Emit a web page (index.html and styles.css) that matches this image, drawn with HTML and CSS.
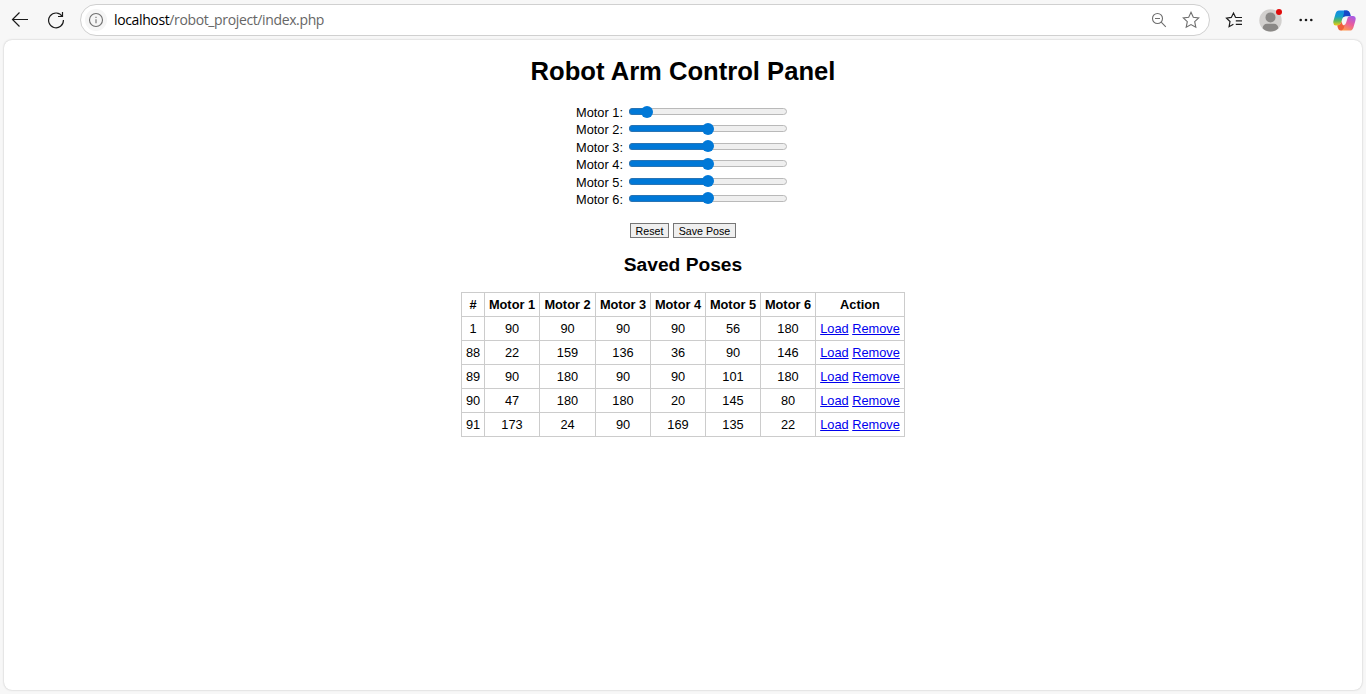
FILE: index.html
```
<!DOCTYPE html>
<html lang="en">
<head>
<meta charset="utf-8">
<title>Robot Arm Control Panel</title>
<link rel="stylesheet" href="styles.css">
</head>
<body>
<header class="toolbar">
  <svg class="back" width="18" height="18" viewBox="0 0 18 18"><path d="M17 8.5H1.5M8.5 1.5l-7 7 7 7"/></svg>
  <svg class="reload" width="18" height="18" viewBox="0 0 18 18"><path d="M15.3 5.5A7.4 7.4 0 1 0 16.4 9M15.5 1V5.5H11"/></svg>
  <div class="address">
    <span class="info"><svg width="16" height="16" viewBox="0 0 16 16"><circle cx="8" cy="8" r="6.5"/><path d="M8 7.2v4M8 4.7v1.3"/></svg></span>
    <span class="url"><b>localhost</b>/robot_project/index.php</span>
    <svg class="zoom" width="16" height="16" viewBox="0 0 16 16"><circle cx="6.5" cy="6.5" r="5"/><path d="M4 6.5h5M10.2 10.2l4.6 4.6"/></svg>
    <svg class="star" width="18" height="18" viewBox="0 0 18 18"><path d="M9 1.3l2.3 5 5.4.7-4 3.7 1.1 5.6L9 13.6l-4.8 2.7 1.1-5.6-4-3.7 5.4-.7z"/></svg>
  </div>
  <svg class="favorites" width="18" height="18" viewBox="0 0 18 18"><path d="M10.6 6.5L8.5 2.1 6.3 6.4l-4.8.7L5 10.5l-.9 5.2 4.3-2.4M10.4 6.5H17M10.8 9.8H17M10.8 13.3H17"/></svg>
  <div class="profile">
    <svg width="23" height="23" viewBox="0 0 23 23"><circle cx="11.5" cy="11.5" r="11.2" fill="#d2d0ce"/><circle cx="11.5" cy="8.4" r="5" fill="#8a8886"/><path d="M3.6 19.2Q4.2 14.7 8 14.7h7q3.8 0 4.4 4.5a11.2 11.2 0 0 1-15.8 0z" fill="#8a8886"/></svg>
    <span class="badge"></span>
  </div>
  <svg class="more" width="14" height="4" viewBox="0 0 14 4"><circle cx="1.7" cy="2" r="1.3"/><circle cx="7" cy="2" r="1.3"/><circle cx="12.3" cy="2" r="1.3"/></svg>
  <svg class="copilot" width="23" height="21" viewBox="0 0 23 21">
    <defs>
      <linearGradient id="cool" x1="0" y1="0" x2="0" y2="1"><stop offset="0" stop-color="#1688e8"/><stop offset=".4" stop-color="#12a0c8"/><stop offset=".7" stop-color="#62b957"/><stop offset="1" stop-color="#f4cc12"/></linearGradient>
      <linearGradient id="warm" x1=".8" y1="0" x2=".3" y2="1"><stop offset="0" stop-color="#a55be8"/><stop offset=".5" stop-color="#ea5c9b"/><stop offset="1" stop-color="#ff9a4c"/></linearGradient>
    </defs>
    <path d="M6 .4h9Q12.8 1 12 6.2q-2 .2-2.6 2.2L8 13Q7.2 15.5 4 15.5H2.8Q-.8 15 .7 10L2.6 3.5Q3.5.4 6 .4z" fill="url(#cool)"/>
    <path d="M11 .4h3q2.3 0 3 2.7l.9 3.1h-4.7q-2 0-3.4 1.2L11 3.3z" fill="#1748c7"/>
    <path d="M17 20.6H7.5q2.3-.9 3.3-5.3 1.8-.6 2.4-2.8l1.5-5q.6-1.5 3.3-1.5h2.3Q23.7 6.2 22.3 11l-1.9 6.5q-.9 3.1-3.4 3.1z" fill="url(#warm)"/>
    <path d="M4.2 15.5Q7.2 15.2 8 13l.7-2.1q.3 4.6 2.8 4.6-.8 5.1-4 5.1-1.8 0-2.5-2.4z" fill="#ef6038"/>
  </svg>
</header>
<main class="page">
  <h1>Robot Arm Control Panel</h1>
  <div class="motors">
    <div class="motor"><label>Motor 1:</label><div class="slider low"><i class="fill"></i><i class="thumb"></i></div></div>
    <div class="motor"><label>Motor 2:</label><div class="slider"><i class="fill"></i><i class="thumb"></i></div></div>
    <div class="motor"><label>Motor 3:</label><div class="slider"><i class="fill"></i><i class="thumb"></i></div></div>
    <div class="motor"><label>Motor 4:</label><div class="slider"><i class="fill"></i><i class="thumb"></i></div></div>
    <div class="motor"><label>Motor 5:</label><div class="slider"><i class="fill"></i><i class="thumb"></i></div></div>
    <div class="motor"><label>Motor 6:</label><div class="slider"><i class="fill"></i><i class="thumb"></i></div></div>
  </div>
  <div class="actions"><button class="reset">Reset</button><button class="save">Save Pose</button></div>
  <h2>Saved Poses</h2>
  <table class="poses">
    <colgroup><col class="c-id"><col class="c-m"><col class="c-m2"><col class="c-m"><col class="c-m"><col class="c-m"><col class="c-m"><col class="c-act"></colgroup>
    <tr><th>#</th><th>Motor 1</th><th>Motor 2</th><th>Motor 3</th><th>Motor 4</th><th>Motor 5</th><th>Motor 6</th><th>Action</th></tr>
    <tr><td>1</td><td>90</td><td>90</td><td>90</td><td>90</td><td>56</td><td>180</td><td><a href="#">Load</a> <a href="#">Remove</a></td></tr>
    <tr><td>88</td><td>22</td><td>159</td><td>136</td><td>36</td><td>90</td><td>146</td><td><a href="#">Load</a> <a href="#">Remove</a></td></tr>
    <tr><td>89</td><td>90</td><td>180</td><td>90</td><td>90</td><td>101</td><td>180</td><td><a href="#">Load</a> <a href="#">Remove</a></td></tr>
    <tr><td>90</td><td>47</td><td>180</td><td>180</td><td>20</td><td>145</td><td>80</td><td><a href="#">Load</a> <a href="#">Remove</a></td></tr>
    <tr><td>91</td><td>173</td><td>24</td><td>90</td><td>169</td><td>135</td><td>22</td><td><a href="#">Load</a> <a href="#">Remove</a></td></tr>
  </table>
</main>
</body>
</html>
```
FILE: styles.css
```
* { box-sizing: border-box; }
body {
  margin: 0;
  height: 694px;
  overflow: hidden;
  display: flex;
  flex-direction: column;
  background: #f7f7f7;
  font: 12.8px/15px "Liberation Sans", Arial, sans-serif;
  color: #000;
}
svg { display: block; flex: none; }

/* Browser toolbar */
.toolbar { height: 40px; flex: none; display: flex; align-items: center; padding-left: 11px; }
.back, .reload, .favorites { fill: none; stroke: #1b1b1b; stroke-width: 1.2; }
.reload { margin-left: 18px; }
.address {
  width: 1130px;
  height: 32px;
  margin-left: 15px;
  flex: none;
  display: flex;
  align-items: center;
  background: #fff;
  border: 1px solid #d0d0d0;
  border-radius: 16px;
}
.info {
  width: 22px;
  height: 22px;
  margin-left: 4px;
  display: grid;
  place-items: center;
  border-radius: 50%;
  background: #f5f5f5;
}
.info svg, .zoom, .star { fill: none; stroke: #6e6e6e; stroke-width: 1.1; }
.url {
  margin-left: 7px;
  flex: 1;
  font: 14px/20px "Open Sans", "Noto Sans", sans-serif;
  letter-spacing: -0.37px;
  color: #666;
}
.url b { font-weight: 400; color: #000; }
.star { margin: 0 9px 0 15px; }
.favorites { margin-left: 15px; }
.profile { position: relative; margin-left: 15.5px; }
.badge {
  position: absolute;
  top: 0;
  right: 0;
  width: 6px;
  height: 6px;
  border-radius: 50%;
  background: #e00b0b;
}
.more { margin-left: 17.5px; fill: #1b1b1b; }
.copilot { margin-left: 20px; }

/* Page */
.page {
  width: 1358px;
  height: 650px;
  margin-left: 4px;
  padding-top: 16px;
  flex: none;
  display: flex;
  flex-direction: column;
  align-items: center;
  background: #fff;
  border-radius: 8px;
  box-shadow: 0 0 2px rgba(0, 0, 0, .25);
}
h1 { margin: 0; font-size: 25.6px; line-height: 30px; }
h2 { margin: 16px 0 16px; font-size: 19.2px; line-height: 22px; }
.motors { margin-top: 18px; width: 214px; }
.motor { height: 17.4px; display: flex; align-items: flex-start; }
.motor label { width: 53px; padding-top: 1px; line-height: 15px; white-space: nowrap; }
.slider {
  --value: 79px;
  position: relative;
  width: 158px;
  height: 7px;
  margin-top: 4px;
  background: #efefef;
  border: 1px solid #b9b9b9;
  border-radius: 4px;
}
.slider.low { --value: 17.5px; }
.fill {
  position: absolute;
  left: -1px;
  top: -1px;
  width: var(--value);
  height: 7px;
  border: 1px solid #2874b5;
  border-right: 0;
  border-radius: 4px 0 0 4px;
  background: #0078d7;
}
.thumb {
  position: absolute;
  left: calc(var(--value) - 7px);
  top: -3.5px;
  width: 12px;
  height: 12px;
  border-radius: 50%;
  background: #0078d7;
}
.actions { margin-top: 14.6px; display: flex; gap: 4px; }
button {
  height: 15px;
  padding: 1px 0 0;
  border: 1px solid #767676;
  border-radius: 0;
  background: #efefef;
  color: #000;
  font: 10.67px/12px "Liberation Sans", Arial, sans-serif;
}
.reset { width: 39px; }
.save { width: 63px; }
.poses { width: 444px; table-layout: fixed; border-collapse: collapse; }
.c-id { width: 23px; }
.c-m { width: 55px; }
.c-m2 { width: 56px; }
.c-act { width: 89px; }
th, td { height: 24px; padding: 0; border: 1px solid #ccc; text-align: center; white-space: nowrap; }
a { color: #00e; }
```
